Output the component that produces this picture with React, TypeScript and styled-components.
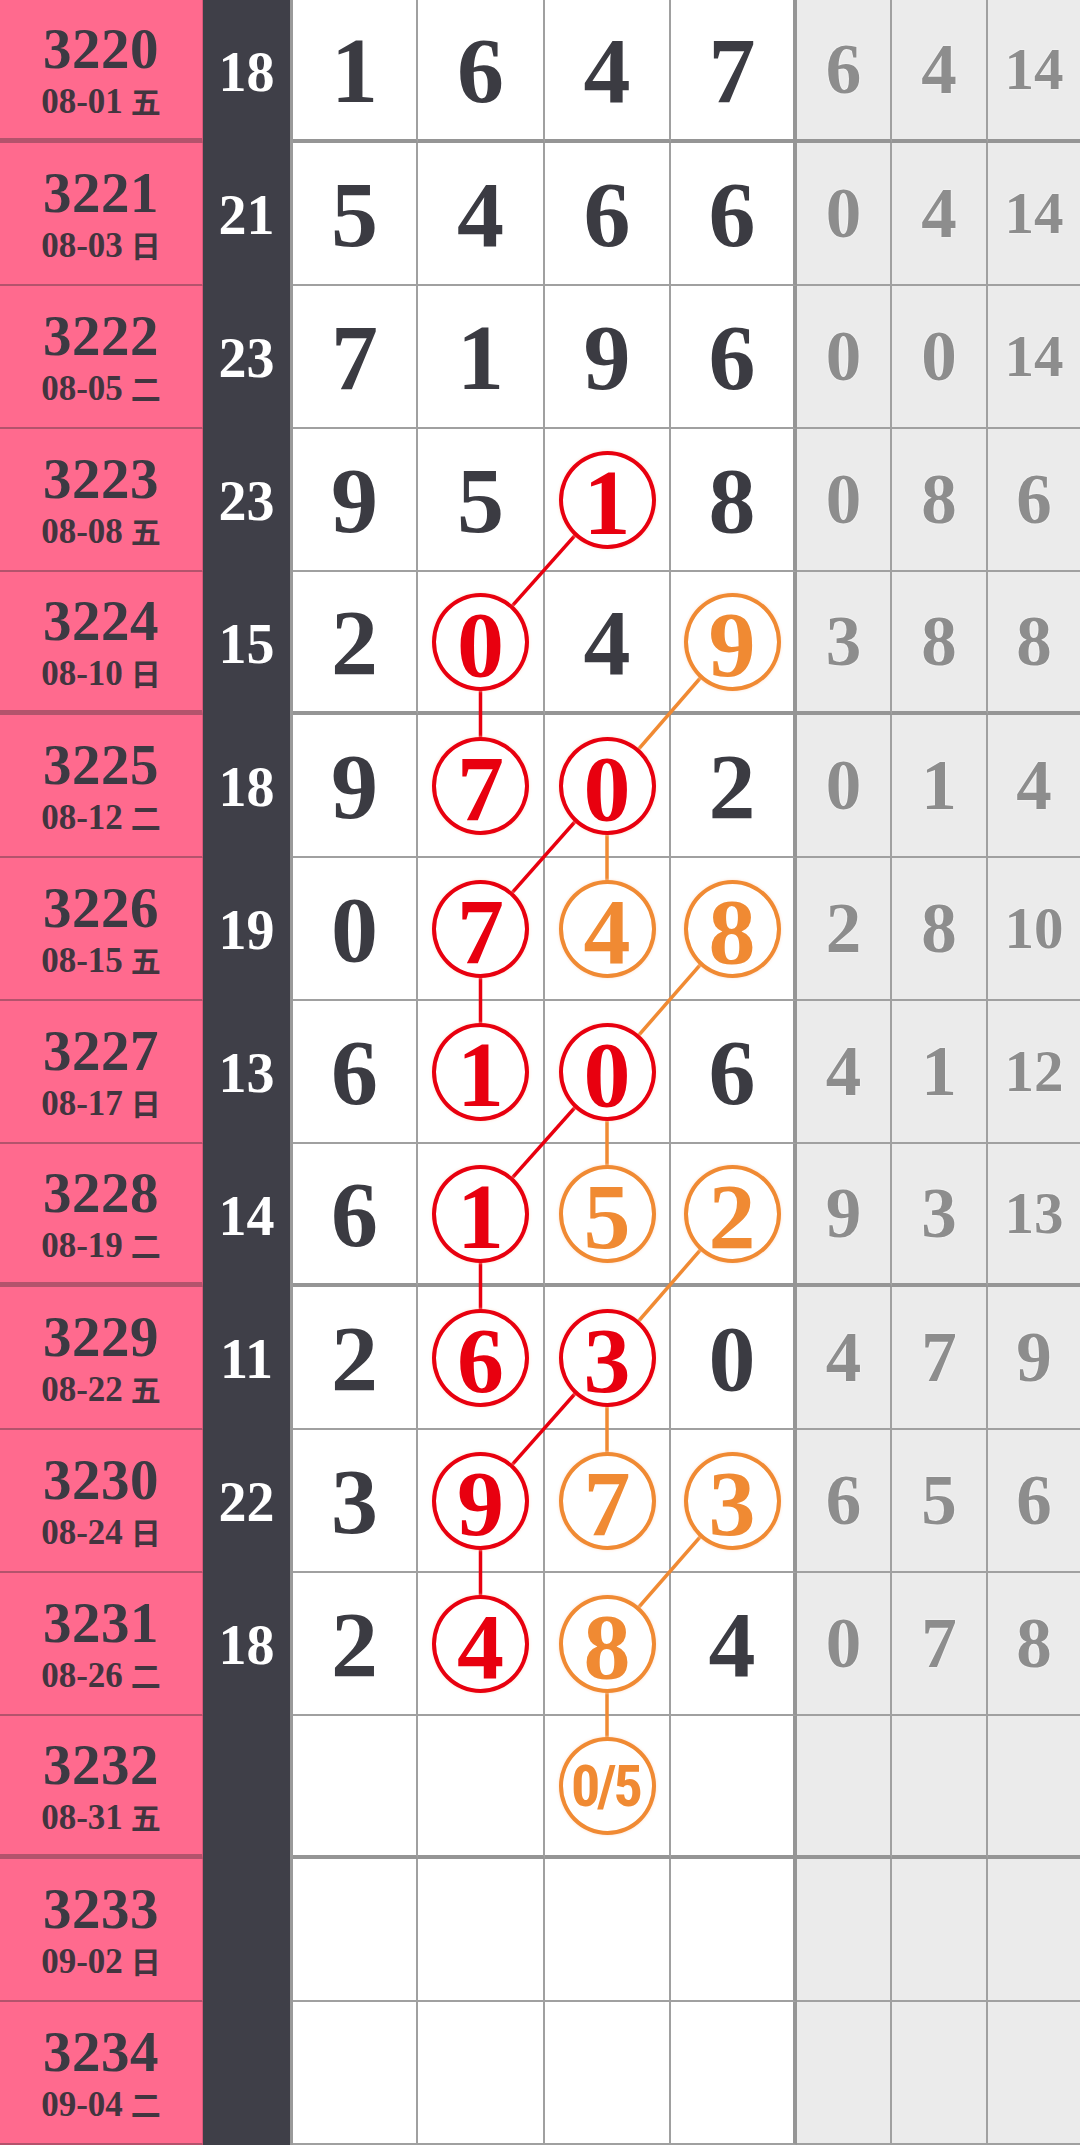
import React from "react";
import styled, { createGlobalStyle } from "styled-components";

const ROW_H = 143;
// pink, sum, four number columns, three stat columns
const COLS = [203, 90, 125, 127, 126, 126, 95, 96, 92];
const RIGHT_BORDER = [0, 3, 2, 2, 2, 4, 2, 2, 0];
const THICK_ROWS = [0, 4, 8, 12];

const RED = "#e8000f";
const ORANGE = "#f08a33";

type Tone = "red" | "orange";
type Num = { v: string; tone?: Tone };

type Row = {
  no: string;
  date: string;
  wd: string;
  sum: string;
  nums: Num[];
  stats: string[];
};

const n = (v: string): Num => ({ v });
const r = (v: string): Num => ({ v, tone: "red" });
const o = (v: string): Num => ({ v, tone: "orange" });
const blank = [n(""), n(""), n(""), n("")];

const rows: Row[] = [
  { no: "3220", date: "08-01", wd: "五", sum: "18", nums: [n("1"), n("6"), n("4"), n("7")], stats: ["6", "4", "14"] },
  { no: "3221", date: "08-03", wd: "日", sum: "21", nums: [n("5"), n("4"), n("6"), n("6")], stats: ["0", "4", "14"] },
  { no: "3222", date: "08-05", wd: "二", sum: "23", nums: [n("7"), n("1"), n("9"), n("6")], stats: ["0", "0", "14"] },
  { no: "3223", date: "08-08", wd: "五", sum: "23", nums: [n("9"), n("5"), r("1"), n("8")], stats: ["0", "8", "6"] },
  { no: "3224", date: "08-10", wd: "日", sum: "15", nums: [n("2"), r("0"), n("4"), o("9")], stats: ["3", "8", "8"] },
  { no: "3225", date: "08-12", wd: "二", sum: "18", nums: [n("9"), r("7"), r("0"), n("2")], stats: ["0", "1", "4"] },
  { no: "3226", date: "08-15", wd: "五", sum: "19", nums: [n("0"), r("7"), o("4"), o("8")], stats: ["2", "8", "10"] },
  { no: "3227", date: "08-17", wd: "日", sum: "13", nums: [n("6"), r("1"), r("0"), n("6")], stats: ["4", "1", "12"] },
  { no: "3228", date: "08-19", wd: "二", sum: "14", nums: [n("6"), r("1"), o("5"), o("2")], stats: ["9", "3", "13"] },
  { no: "3229", date: "08-22", wd: "五", sum: "11", nums: [n("2"), r("6"), r("3"), n("0")], stats: ["4", "7", "9"] },
  { no: "3230", date: "08-24", wd: "日", sum: "22", nums: [n("3"), r("9"), o("7"), o("3")], stats: ["6", "5", "6"] },
  { no: "3231", date: "08-26", wd: "二", sum: "18", nums: [n("2"), r("4"), o("8"), n("4")], stats: ["0", "7", "8"] },
  { no: "3232", date: "08-31", wd: "五", sum: "", nums: [n(""), n(""), o("0/5"), n("")], stats: ["", "", ""] },
  { no: "3233", date: "09-02", wd: "日", sum: "", nums: blank, stats: ["", "", ""] },
  { no: "3234", date: "09-04", wd: "二", sum: "", nums: blank, stats: ["", "", ""] },
];

// [numCol, row] -> [numCol, row]
const links: { a: [number, number]; b: [number, number]; tone: Tone }[] = [
  { a: [2, 3], b: [1, 4], tone: "red" },
  { a: [1, 4], b: [1, 5], tone: "red" },
  { a: [2, 5], b: [1, 6], tone: "red" },
  { a: [1, 6], b: [1, 7], tone: "red" },
  { a: [2, 7], b: [1, 8], tone: "red" },
  { a: [1, 8], b: [1, 9], tone: "red" },
  { a: [2, 9], b: [1, 10], tone: "red" },
  { a: [1, 10], b: [1, 11], tone: "red" },
  { a: [3, 4], b: [2, 5], tone: "orange" },
  { a: [2, 5], b: [2, 6], tone: "orange" },
  { a: [3, 6], b: [2, 7], tone: "orange" },
  { a: [2, 7], b: [2, 8], tone: "orange" },
  { a: [3, 8], b: [2, 9], tone: "orange" },
  { a: [2, 9], b: [2, 10], tone: "orange" },
  { a: [3, 10], b: [2, 11], tone: "orange" },
  { a: [2, 11], b: [2, 12], tone: "orange" },
];

const isThick = (i: number) => THICK_ROWS.includes(i);

const colCenter = (numCol: number) => {
  const idx = numCol + 2;
  const left = COLS.slice(0, idx).reduce((s, w) => s + w, 0);
  return left + (COLS[idx] - RIGHT_BORDER[idx]) / 2;
};

const rowCenter = (row: number) => row * ROW_H + (ROW_H - (isThick(row) ? 4 : 2)) / 2;

const GlobalStyle = createGlobalStyle`
  html, body {
    margin: 0;
    padding: 0;
    background: #ffffff;
  }
  body {
    font-family: "Liberation Serif", "Noto Sans CJK SC", serif;
  }
`;

const Board = styled.div`
  position: relative;
  width: 1080px;
  display: grid;
  grid-template-columns: ${COLS.map((w) => `${w}px`).join(" ")};
  grid-auto-rows: ${ROW_H}px;
  overflow: hidden;
`;

const IssueCell = styled.div<{ $thick: boolean }>`
  box-sizing: border-box;
  background: #ff6a8e;
  border-right: 1px solid #d8587a;
  border-bottom: ${(p) => (p.$thick ? 5 : 2)}px solid #b4536c;
  display: flex;
  flex-direction: column;
  align-items: center;
  justify-content: center;
  color: #3c3a43;
  font-weight: 700;
  padding-top: 6px;
`;

const IssueNo = styled.div`
  font-size: 57px;
  line-height: 52px;
  letter-spacing: 0.5px;
`;

const IssueDate = styled.div`
  display: flex;
  align-items: baseline;
  gap: 8px;
  font-size: 35px;
  line-height: 40px;
  margin-top: 5px;
  color: #42353f;
`;

const Weekday = styled.span`
  font-family: "Noto Sans CJK SC", sans-serif;
  font-size: 30px;
  font-weight: 700;
`;

const SumCell = styled.div`
  box-sizing: border-box;
  background: #3f3f48;
  border-right: 3px solid #9a9a9a;
  display: flex;
  align-items: center;
  justify-content: center;
  color: #ffffff;
  font-size: 56px;
  font-weight: 700;
`;

const NumCell = styled.div<{ $thick: boolean; $edge: boolean }>`
  box-sizing: border-box;
  background: #ffffff;
  border-right: ${(p) => (p.$edge ? 4 : 2)}px solid ${(p) => (p.$edge ? "#959595" : "#a0a0a0")};
  border-bottom: ${(p) => (p.$thick ? 4 : 2)}px solid ${(p) => (p.$thick ? "#959595" : "#a0a0a0")};
  display: flex;
  align-items: center;
  justify-content: center;
  color: #3b3b42;
  font-size: 94px;
  font-weight: 700;
  line-height: 1;
`;

const Ball = styled.span<{ $tone: Tone }>`
  position: relative;
  z-index: 2;
  box-sizing: border-box;
  width: 97px;
  height: 98px;
  border-radius: 50%;
  border: 4px solid ${(p) => (p.$tone === "red" ? RED : ORANGE)};
  background: #ffffff;
  color: ${(p) => (p.$tone === "red" ? RED : ORANGE)};
  box-shadow: 0 0 3px rgba(255, 220, 200, 0.9);
  display: flex;
  align-items: center;
  justify-content: center;
  padding-top: 4px;
`;

const Guess = styled.span`
  font-family: "Liberation Sans Narrow", "Roboto", sans-serif;
  font-stretch: condensed;
  font-size: 58px;
  font-weight: 700;
  letter-spacing: -3px;
  margin-top: -4px;
  margin-left: -3px;
`;

const StatCell = styled.div<{ $thick: boolean; $end: boolean }>`
  box-sizing: border-box;
  background: #ebebeb;
  border-right: ${(p) => (p.$end ? 0 : 2)}px solid #a0a0a0;
  border-bottom: ${(p) => (p.$thick ? 4 : 2)}px solid ${(p) => (p.$thick ? "#959595" : "#a0a0a0")};
  display: flex;
  align-items: center;
  justify-content: center;
  color: #8d8d8d;
  font-weight: 700;
  text-shadow: 0 0 2px #ffffff;
`;

const StatValue = styled.span<{ $wide: boolean }>`
  font-size: ${(p) => (p.$wide ? 59 : 71)}px;
  line-height: 1;
`;

const LinkLayer = styled.svg`
  position: absolute;
  left: 0;
  top: 0;
  z-index: 1;
  pointer-events: none;
`;

export default function App() {
  const height = rows.length * ROW_H;
  return (
    <>
      <GlobalStyle />
      <Board>
        {rows.map((row, i) => {
          const thick = isThick(i);
          return (
            <React.Fragment key={row.no}>
              <IssueCell $thick={thick}>
                <IssueNo>{row.no}</IssueNo>
                <IssueDate>
                  <span>{row.date}</span>
                  <Weekday>{row.wd}</Weekday>
                </IssueDate>
              </IssueCell>
              <SumCell>{row.sum}</SumCell>
              {row.nums.map((num, j) => (
                <NumCell key={j} $thick={thick} $edge={j === 3}>
                  {num.tone ? (
                    <Ball $tone={num.tone}>
                      {num.v.includes("/") ? <Guess>{num.v}</Guess> : num.v}
                    </Ball>
                  ) : (
                    num.v
                  )}
                </NumCell>
              ))}
              {row.stats.map((s, j) => (
                <StatCell key={j} $thick={thick} $end={j === 2}>
                  <StatValue $wide={s.length > 1}>{s}</StatValue>
                </StatCell>
              ))}
            </React.Fragment>
          );
        })}
        <LinkLayer width={1080} height={height} viewBox={`0 0 1080 ${height}`}>
          {links.map((l, k) => (
            <line
              key={k}
              x1={colCenter(l.a[0])}
              y1={rowCenter(l.a[1])}
              x2={colCenter(l.b[0])}
              y2={rowCenter(l.b[1])}
              stroke={l.tone === "red" ? RED : ORANGE}
              strokeWidth={3.5}
            />
          ))}
        </LinkLayer>
      </Board>
    </>
  );
}
